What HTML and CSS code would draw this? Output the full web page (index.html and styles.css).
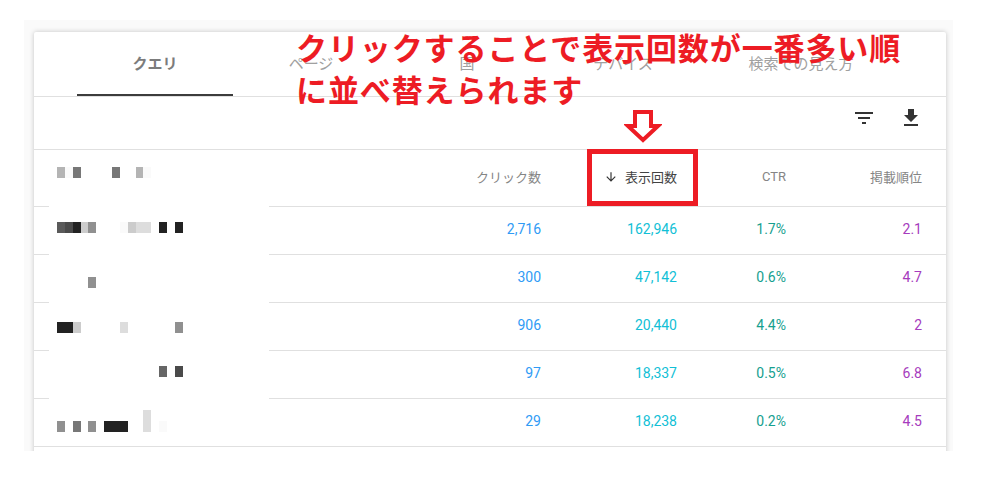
FILE: index.html
```html
<!DOCTYPE html>
<html lang="ja">
<head>
    <meta charset="UTF-8">
    <meta name="viewport" content="width=device-width, initial-scale=1.0">
    <title>検索パフォーマンス</title>
    <link rel="stylesheet" href="styles.css">
</head>
<body>
    <div class="panel">
        <div class="card">
            <div class="tabs">
                <div class="tab tab-active">クエリ</div>
                <div class="tab">ページ</div>
                <div class="tab">国</div>
                <div class="tab">デバイス</div>
                <div class="tab tab-wide">検索での見え方</div>
            </div>

            <div class="toolbar">
                <svg class="tool-icon" xmlns="http://www.w3.org/2000/svg" width="24" height="24" viewBox="0 0 24 24" fill="currentColor">
                    <path d="M10 18h4v-2h-4v2zM3 6v2h18V6H3zm3 7h12v-2H6v2z"></path>
                </svg>
                <svg class="tool-icon" xmlns="http://www.w3.org/2000/svg" width="24" height="24" viewBox="0 0 24 24" fill="currentColor">
                    <path d="M19 9h-4V3H9v6H5l7 7 7-7zM5 18v2h14v-2H5z"></path>
                </svg>
            </div>

            <div class="row row-head">
                <div class="query">
                    <div class="mosaic top-17">
                        <i class="s-b"></i><i class="s-f"></i><i class="s-7"></i><i></i><i></i><i></i><i></i><i class="s-7"></i><i></i><i></i><i class="s-b"></i><i class="s-f"></i>
                    </div>
                </div>
                <div class="cell">クリック数</div>
                <div class="cell cell-sorted">
                    <svg class="sort-icon" xmlns="http://www.w3.org/2000/svg" width="14" height="14" viewBox="0 0 24 24" fill="currentColor">
                        <path d="M20 12l-1.41-1.41L13 16.17V4h-2v12.17l-5.58-5.59L4 12l8 8 8-8z"></path>
                    </svg>
                    表示回数
                </div>
                <div class="cell">CTR</div>
                <div class="cell cell-last">掲載順位</div>
            </div>

            <div class="row">
                <div class="query">
                    <div class="mosaic top-15">
                        <i class="s-5"></i><i class="s-4"></i><i class="s-2"></i><i class="s-c"></i><i class="s-9"></i><i></i><i></i><i></i><i class="s-f"></i><i class="s-c"></i><i class="s-d"></i><i class="s-d"></i><i></i><i class="s-2"></i><i></i><i class="s-2"></i>
                    </div>
                </div>
                <div class="cell clicks">2,716</div>
                <div class="cell views">162,946</div>
                <div class="cell ctr">1.7%</div>
                <div class="cell cell-last rank">2.1</div>
            </div>

            <div class="row">
                <div class="query">
                    <div class="mosaic top-22">
                        <i></i><i></i><i></i><i></i><i class="s-9"></i>
                    </div>
                </div>
                <div class="cell clicks">300</div>
                <div class="cell views">47,142</div>
                <div class="cell ctr">0.6%</div>
                <div class="cell cell-last rank">4.7</div>
            </div>

            <div class="row">
                <div class="query">
                    <div class="mosaic top-19">
                        <i class="s-2"></i><i class="s-2"></i><i class="s-c"></i><i></i><i></i><i></i><i></i><i></i><i class="s-d"></i><i></i><i></i><i></i><i></i><i></i><i></i><i class="s-9"></i>
                    </div>
                </div>
                <div class="cell clicks">906</div>
                <div class="cell views">20,440</div>
                <div class="cell ctr">4.4%</div>
                <div class="cell cell-last rank">2</div>
            </div>

            <div class="row">
                <div class="query">
                    <div class="mosaic top-15">
                        <i></i><i></i><i></i><i></i><i></i><i></i><i></i><i></i><i></i><i></i><i></i><i></i><i></i><i class="s-6"></i><i></i><i class="s-4"></i>
                    </div>
                </div>
                <div class="cell clicks">97</div>
                <div class="cell views">18,337</div>
                <div class="cell ctr">0.5%</div>
                <div class="cell cell-last rank">6.8</div>
            </div>

            <div class="row row-open">
                <div class="query">
                    <div class="mosaic mosaic-tall top-11">
                        <i class="s-9"></i><i></i><i class="s-7"></i><i></i><i class="s-9"></i><i></i><i class="s-2"></i><i class="s-2"></i><i class="s-2"></i><i></i><i></i><i class="s-d tall"></i><i></i><i class="s-f"></i>
                    </div>
                </div>
                <div class="cell clicks">29</div>
                <div class="cell views">18,238</div>
                <div class="cell ctr">0.2%</div>
                <div class="cell cell-last rank">4.5</div>
            </div>

            <!-- annotations pasted over the screenshot -->
            <p class="note">クリックすることで表示回数が一番多い順<br>に並べ替えられます</p>
            <svg class="note-arrow" xmlns="http://www.w3.org/2000/svg" width="38" height="35" viewBox="0 0 38 35">
                <polygon points="11,2 27,2 27,16 34,16 19,30 4,16 11,16" fill="#fff" stroke="#ed1c24" stroke-width="4"></polygon>
            </svg>
        </div>
    </div>
</body>
</html>
```

FILE: styles.css
```css
body {
    margin: 0;
    padding: 20px 28px 0 24px;
    background-color: white;
    font-family: Roboto, "Noto Sans CJK JP", sans-serif;
}
.panel {
    height: 431px;
    padding: 12px 7px 0 10px;
    box-sizing: border-box;
    background-color: #fafafa;
    overflow: hidden;
}
.card {
    position: relative;
    height: 440px;
    background-color: white;
    border-radius: 2px;
    box-shadow: 0 0 5px rgba(0, 0, 0, 0.22);
}
.tabs {
    display: flex;
    height: 65px;
    padding-left: 43px;
    box-sizing: border-box;
    border-bottom: 1px solid #e0e0e0;
}
.tab {
    width: 156px;
    box-sizing: border-box;
    padding-top: 21px;
    font-size: 15px;
    line-height: 22px;
    text-align: center;
    color: #a0a0a0;
}
.tab-active {
    height: 64px;
    border-bottom: 2px solid #3c3c3c;
    font-weight: 700;
    color: #7c7c7c;
}
.tab-wide {
    width: 200px;
}
.toolbar {
    display: flex;
    justify-content: flex-end;
    align-items: flex-start;
    gap: 23px;
    height: 53px;
    padding: 9px 23px 0 0;
    box-sizing: border-box;
    border-bottom: 1px solid #e0e0e0;
}
.tool-icon {
    color: #333;
}
.row {
    display: grid;
    grid-template-columns: 235px 293px 136px 109px 139px;
    height: 48px;
    box-sizing: border-box;
    border-bottom: 1px solid #e0e0e0;
}
.row-head {
    height: 57px;
}
.query {
    margin: 0 0 -1px 15px;
    padding-left: 8px;
    background-color: white;
}
.row-open .query {
    margin-bottom: 0;
}
.mosaic {
    display: flex;
    align-items: flex-end;
}
.mosaic i {
    display: block;
    width: 7.87px;
    height: 11px;
}
.mosaic-tall {
    height: 22px;
}
.mosaic .tall {
    height: 22px;
}
.top-11 { margin-top: 11px; }
.top-15 { margin-top: 15px; }
.top-17 { margin-top: 17px; }
.top-19 { margin-top: 19px; }
.top-22 { margin-top: 22px; }
.s-2 { background-color: #222; }
.s-4 { background-color: #4a4a4a; }
.s-5 { background-color: #5a5a5a; }
.s-6 { background-color: #666; }
.s-7 { background-color: #777; }
.s-9 { background-color: #909090; }
.s-b { background-color: #b4b4b4; }
.s-c { background-color: #ccc; }
.s-d { background-color: #ddd; }
.s-f { background-color: #fafafa; }
.cell {
    position: relative;
    display: flex;
    justify-content: flex-end;
    align-items: center;
    padding: 0 21px 4px 0;
    font-size: 14px;
}
.cell-last {
    padding-right: 24px;
}
.row-head .cell {
    padding-bottom: 3px;
    font-size: 13px;
    color: #858585;
}
.row-head .cell-sorted {
    gap: 7px;
    color: #424242;
}
.cell-sorted::after {
    content: "";
    position: absolute;
    top: -1px;
    right: 0;
    bottom: 0;
    width: 111px;
    box-sizing: border-box;
    border: 5px solid #ed1c24;
}
.sort-icon {
    color: #333;
}
.clicks { color: #2f9bf5; }
.views { color: #12bfd6; }
.ctr { color: #16a08f; }
.rank { color: #a63cbd; }
.note {
    position: absolute;
    top: -3px;
    left: 262px;
    margin: 0;
    font-size: 31px;
    font-weight: 700;
    line-height: 42px;
    letter-spacing: 0.9px;
    white-space: nowrap;
    color: #ed1c24;
}
.note-arrow {
    position: absolute;
    top: 78px;
    left: 590px;
}
```
